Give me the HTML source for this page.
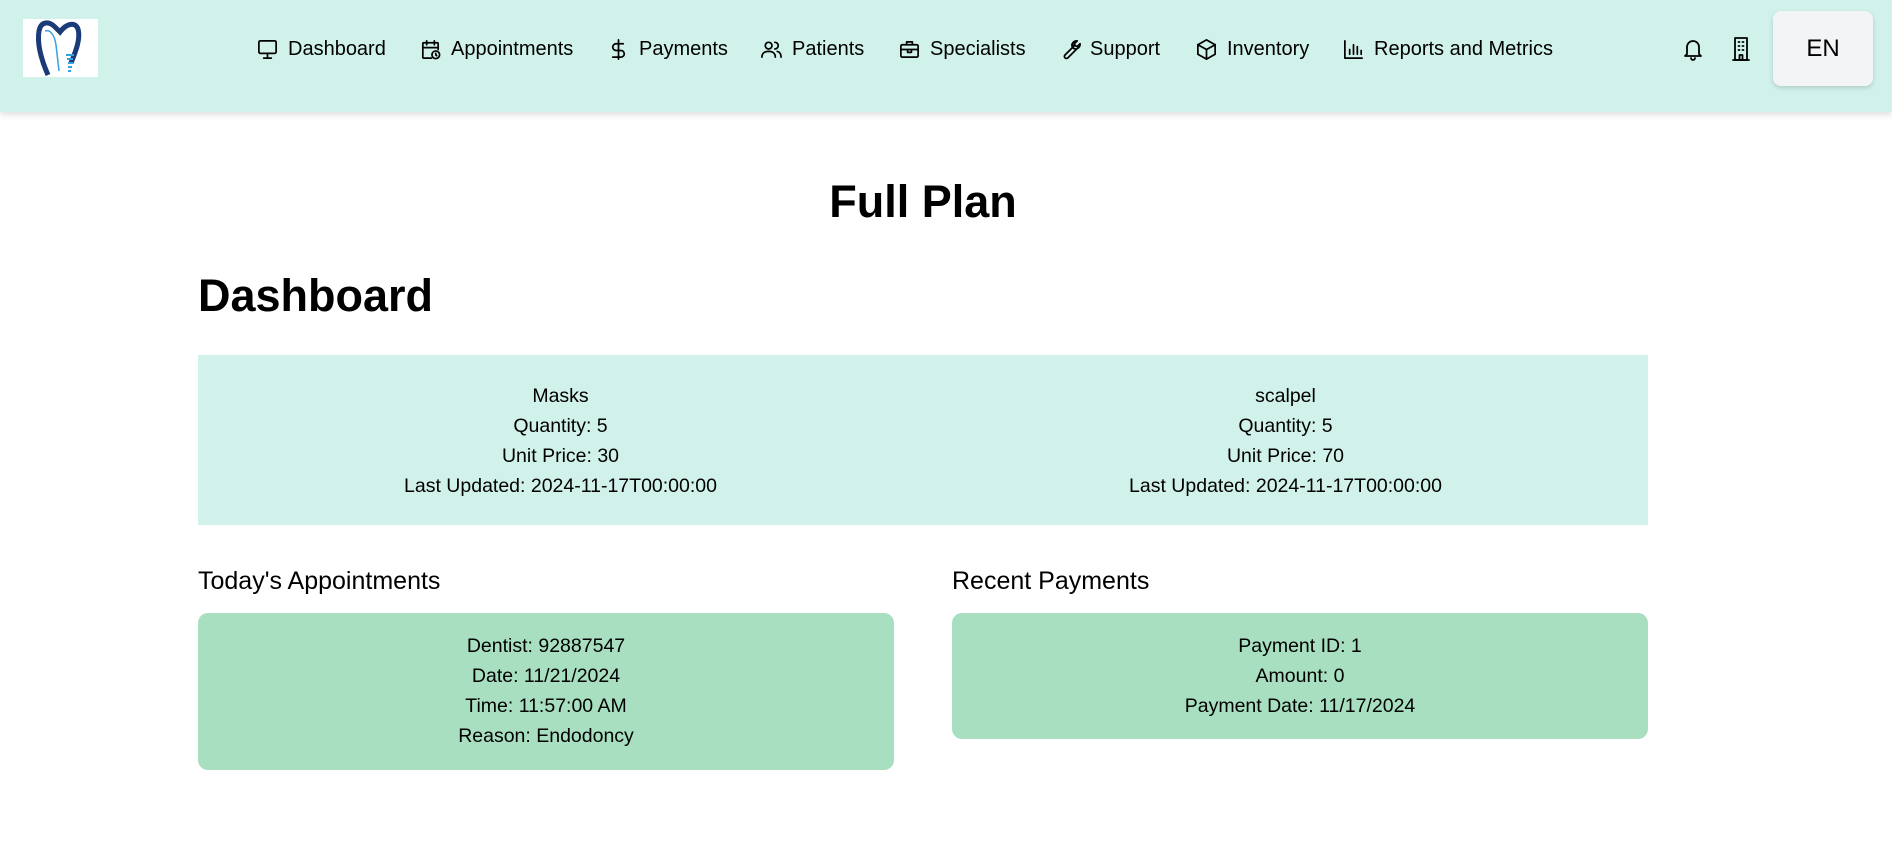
<!DOCTYPE html>
<html><head><meta charset="utf-8"><style>
*{margin:0;padding:0;box-sizing:border-box}
body{width:1892px;height:857px;background:#fff;font-family:"Liberation Sans",Arial,sans-serif;color:#000;position:relative;overflow:hidden}
.hdr{position:absolute;left:0;top:0;width:1892px;height:112px;background:#d1f1eb;box-shadow:0 3px 6px rgba(0,0,0,.12)}
.logo{position:absolute;left:23px;top:19px;width:75px;height:58px;background:#fff}
.nav{position:absolute;top:36px;height:26px;display:flex;align-items:center;font-size:20px;white-space:nowrap}
.nav svg{width:23px;height:23px;margin-right:9px;fill:none;stroke:#000;stroke-width:1.8;stroke-linecap:round;stroke-linejoin:round}
.ic{position:absolute;top:36px}
.ic svg{width:24px;height:26px;fill:none;stroke:#000;stroke-width:1.8;stroke-linecap:round;stroke-linejoin:round}
.en{position:absolute;left:1773px;top:11px;width:100px;height:75px;background:#f3f4f6;border-radius:8px;box-shadow:0 2px 5px rgba(0,0,0,.15);font-size:24px;display:flex;align-items:center;justify-content:center}
h1.t{position:absolute;left:0;width:1846px;top:176px;text-align:center;font-size:45px;font-weight:bold}
h1.d{position:absolute;left:198px;top:270px;font-size:45px;font-weight:bold}
.inv{position:absolute;left:198px;top:355px;width:1450px;height:170px;background:#d1f1eb;display:flex;padding-top:26px}
.inv div{flex:1;text-align:center;font-size:19.5px;line-height:30px}
h3{position:absolute;top:567px;font-size:25px;font-weight:normal}
.card{position:absolute;top:613px;width:696px;background:#a8dfc0;border-radius:10px;text-align:center;font-size:19.5px;line-height:30px;padding-top:18px}
</style></head><body>
<div class="hdr">
<div class="logo"><svg width="75" height="58" viewBox="0 0 75 58"><path d="M25 56 C18 40 14 24 16 12 C18 2 26 2 32 8 L37 13 C43 5 52 2 55 10 C58 20 52 34 48 44" fill="none" stroke="#1b3a78" stroke-width="5"/><path d="M22 12 C28 10 32 18 33 26 L36 52" fill="none" stroke="#3aa0e0" stroke-width="1.5"/><path d="M43 36 h8 M44 40 h6 M45 44 h5 M45 48 h4 M45 52 h3" stroke="#3aa0e0" stroke-width="2"/></svg></div>
<div class="nav" style="left:256px"><svg viewBox="0 0 24 24"><rect x="3" y="3" width="18" height="13" rx="1.5"/><path d="M12 16v5M8 21h8"/></svg>Dashboard</div>
<div class="nav" style="left:419px"><svg viewBox="0 0 24 24"><path d="M13 21H5a1 1 0 0 1-1-1V6a1 1 0 0 1 1-1h14a1 1 0 0 1 1 1v6M8 3v4M16 3v4M4 10h16"/><circle cx="17.5" cy="17.5" r="4"/><path d="M17.5 16v1.7l1 .8"/></svg>Appointments</div>
<div class="nav" style="left:607px"><svg viewBox="0 0 24 24"><path d="M12 2v20M17 6H9.5a3.5 3.5 0 0 0 0 7h5a3.5 3.5 0 0 1 0 7H6"/></svg>Payments</div>
<div class="nav" style="left:760px"><svg viewBox="0 0 24 24"><circle cx="9" cy="8" r="3.5"/><path d="M2 20c0-4 3-6 7-6s7 2 7 6M15.5 4.5a3.5 3.5 0 0 1 0 7M18 14c2.5.5 4 2.5 4 6"/></svg>Patients</div>
<div class="nav" style="left:898px"><svg viewBox="0 0 24 24"><rect x="3" y="7" width="18" height="13" rx="1.5"/><path d="M9 7V4h6v3M3 12h18M10 12v3h4v-3"/></svg>Specialists</div>
<div class="nav" style="left:1058px"><svg viewBox="0 0 24 24"><path d="M14.7 6.3a4 4 0 0 0 5 5l-9.4 9.4a2 2 0 0 1-3-3l9.4-9.4a4 4 0 0 1-2-2zM14.7 6.3A5 5 0 0 1 20 3l-3 3 1 2 2 1 3-3a5 5 0 0 1-3.3 5.3"/></svg>Support</div>
<div class="nav" style="left:1195px"><svg viewBox="0 0 24 24"><path d="M12 2l9 5v10l-9 5-9-5V7z"/><path d="M3 7l9 5 9-5M12 12v10"/></svg>Inventory</div>
<div class="nav" style="left:1342px"><svg viewBox="0 0 24 24"><path d="M3 3v18h18M8 17v-5M12 17V7M16 17v-8M20 17v-4"/></svg>Reports and Metrics</div>
<div class="ic" style="left:1681px"><svg viewBox="0 0 24 26"><path d="M6 18V11a6 6 0 0 1 12 0v7l2 2H4z"/><path d="M10 22a2 2 0 0 0 4 0"/></svg></div>
<div class="ic" style="left:1729px"><svg viewBox="0 0 24 26"><rect x="6" y="2" width="12" height="22"/><path d="M4 24h16M9.5 6h1M13.5 6h1M9.5 10h1M13.5 10h1M9.5 14h1M13.5 14h1M10.5 24v-5h3v5"/></svg></div>
<div class="en">EN</div>
</div>
<h1 class="t">Full Plan</h1>
<h1 class="d">Dashboard</h1>
<div class="inv">
<div>Masks<br>Quantity: 5<br>Unit Price: 30<br>Last Updated: 2024-11-17T00:00:00</div>
<div>scalpel<br>Quantity: 5<br>Unit Price: 70<br>Last Updated: 2024-11-17T00:00:00</div>
</div>
<h3 style="left:198px">Today's Appointments</h3>
<h3 style="left:952px">Recent Payments</h3>
<div class="card" style="left:198px;height:157px">Dentist: 92887547<br>Date: 11/21/2024<br>Time: 11:57:00 AM<br>Reason: Endodoncy</div>
<div class="card" style="left:952px;height:126px">Payment ID: 1<br>Amount: 0<br>Payment Date: 11/17/2024</div>
</body></html>
